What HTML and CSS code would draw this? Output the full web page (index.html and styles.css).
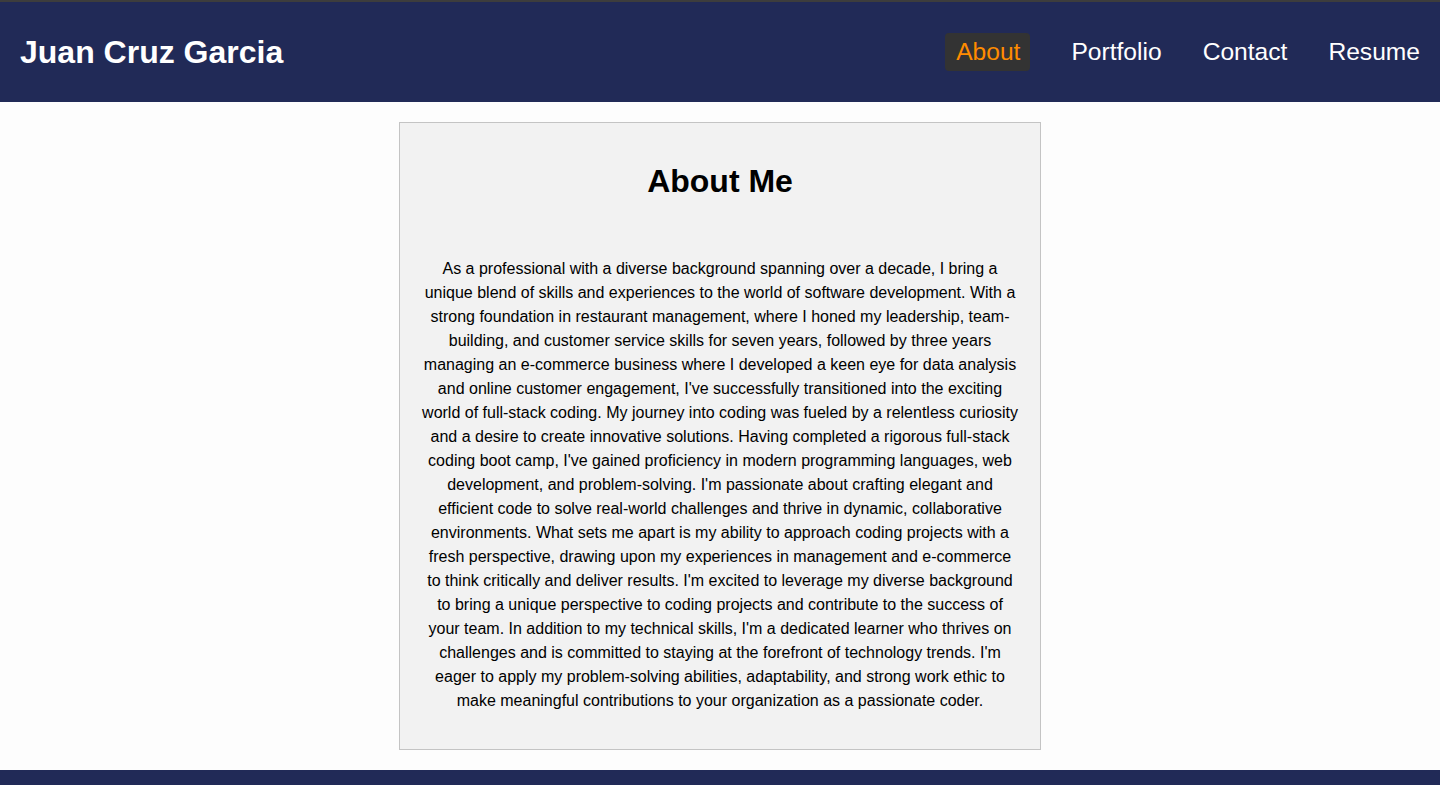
FILE: index.html
```html
<!DOCTYPE html>
<html lang="en">
<head>
<meta charset="utf-8">
<title>Juan Cruz Garcia</title>
<link rel="stylesheet" href="styles.css">
</head>
<body>
<header class="site-header">
  <h1 class="site-title">Juan Cruz Garcia</h1>
  <nav class="site-nav">
    <a class="nav-link active" href="#about">About</a>
    <a class="nav-link" href="#portfolio">Portfolio</a>
    <a class="nav-link" href="#contact">Contact</a>
    <a class="nav-link" href="#resume">Resume</a>
  </nav>
</header>
<main class="main">
  <section class="about-card" id="about">
    <h2 class="about-title">About Me</h2>
    <p class="about-text">As a professional with a diverse background spanning over a decade, I bring a unique blend of skills and experiences to the world of software development. With a strong foundation in restaurant management, where I honed my leadership, team-building, and customer service skills for seven years, followed by three years managing an e-commerce business where I developed a keen eye for data analysis and online customer engagement, I've successfully transitioned into the exciting world of full-stack coding. My journey into coding was fueled by a relentless curiosity and a desire to create innovative solutions. Having completed a rigorous full-stack coding boot camp, I've gained proficiency in modern programming languages, web development, and problem-solving. I'm passionate about crafting elegant and efficient code to solve real-world challenges and thrive in dynamic, collaborative environments. What sets me apart is my ability to approach coding projects with a fresh perspective, drawing upon my experiences in management and e-commerce to think critically and deliver results. I'm excited to leverage my diverse background to bring a unique perspective to coding projects and contribute to the success of your team. In addition to my technical skills, I'm a dedicated learner who thrives on challenges and is committed to staying at the forefront of technology trends. I'm eager to apply my problem-solving abilities, adaptability, and strong work ethic to make meaningful contributions to your organization as a passionate coder.</p>
  </section>
</main>
<footer class="site-footer"></footer>
</body>
</html>
```
FILE: styles.css
```css
html, body {
  margin: 0;
  padding: 0;
}
body {
  background: #fdfdfd;
  font-family: "Liberation Sans", Arial, Helvetica, sans-serif;
  color: #000;
}
.site-header {
  background: #212a57;
  border-top: 2px solid #3d3d3d;
  height: 100px;
  display: flex;
  align-items: center;
  justify-content: space-between;
  padding: 0 10px 0 20px;
}
.site-title {
  margin: 0;
  font-size: 32px;
  font-weight: bold;
  color: #fff;
}
.site-nav {
  display: flex;
  align-items: center;
  gap: 21px;
}
.nav-link {
  color: #fff;
  text-decoration: none;
  font-size: 24.6px;
  padding: 5px 10px;
  border-radius: 4px;
}
.nav-link.active {
  color: #ff8c00;
  background: #333333;
  padding: 5px 10px 5px 11px;
  margin-right: 10px;
}
.main {
  padding: 20px 0;
  display: flex;
  justify-content: center;
}
.about-card {
  width: 600px;
  background: #f2f2f2;
  border: 1px solid #c4c4c4;
  padding: 20px 20px 20px;
  text-align: center;
}
.about-title {
  margin: 20px 0 57px;
  font-size: 32px;
  font-weight: bold;
}
.about-text {
  margin: 0 0 16px;
  font-size: 16px;
  line-height: 24px;
}
.site-footer {
  background: #212a57;
  height: 60px;
}
```
